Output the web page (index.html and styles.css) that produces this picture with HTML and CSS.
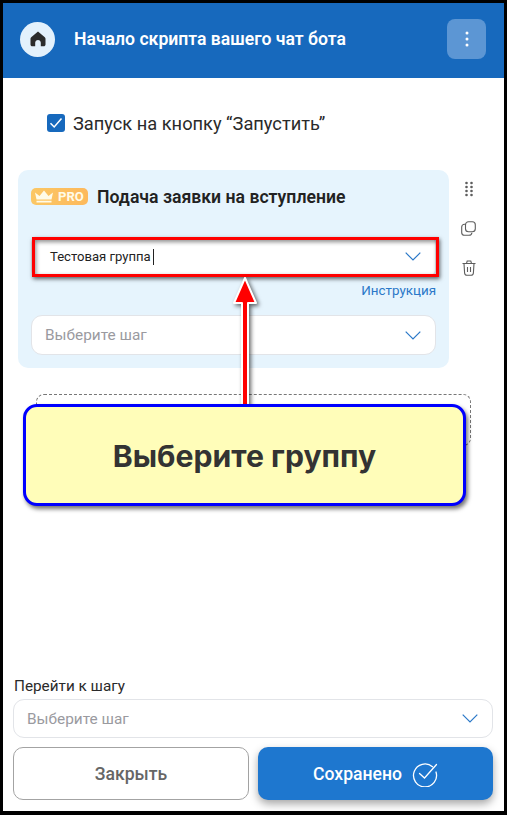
FILE: index.html
```html
<!DOCTYPE html>
<html lang="ru">
<head>
<meta charset="utf-8">
<title>Начало скрипта</title>
<link rel="stylesheet" href="styles.css">
</head>
<body>
<div class="app">
  <header class="topbar">
    <span class="home"><svg width="18" height="18" viewBox="0 0 18 18"><path d="M9 1.6 2.2 7.2c-.5.4-.7.9-.7 1.5v5.8c0 1 .8 1.8 1.8 1.8h2.9v-3.6c0-1.5 1.2-2.8 2.8-2.8s2.8 1.3 2.8 2.8v3.600h2.900c1 0 1.800-.8 1.800-1.800V8.700c0-.6-.2-1.100-.7-1.500z" fill="#2b2b2b"/></svg></span>
    <h1 class="topbar-title">Начало скрипта вашего чат бота</h1>
    <button class="menu-btn"><svg width="4" height="16" viewBox="0 0 4 16"><circle cx="2" cy="2" r="1.500" fill="#fff"/><circle cx="2" cy="8" r="1.500" fill="#fff"/><circle cx="2" cy="14" r="1.500" fill="#fff"/></svg></button>
  </header>

  <main class="content">
    <label class="check-row">
      <span class="checkbox"><svg width="14" height="12" viewBox="0 0 14 12"><path d="M1.500 6.200 5.200 10 12.500 1.500" fill="none" stroke="#fff" stroke-width="1.500"/></svg></span>
      Запуск на кнопку “Запустить”
    </label>

    <div class="step-row">
      <section class="card">
        <div class="card-head">
          <span class="pro"><svg width="20" height="13" viewBox="0 0 20 13"><path d="M1 2.500 5.500 6 10 .5 14.500 6 19 2.500 17.500 9.500H2.500zM2.500 10.800h15V12.500h-15z" fill="#fffbe8"/></svg>PRO</span>
          <h2 class="card-title">Подача заявки на вступление</h2>
        </div>
        <div class="select select-active">
          <span class="select-text">Тестовая группа<i class="caret"></i></span>
          <svg class="chev" width="16" height="9" viewBox="0 0 16 9"><path d="M.7.7 8 8 15.300.7" fill="none" stroke="#2a78c8" stroke-width="1.200"/></svg>
        </div>
        <a class="help">Инструкция</a>
        <div class="select">
          <span class="placeholder">Выберите шаг</span>
          <svg class="chev" width="16" height="9" viewBox="0 0 16 9"><path d="M.7.7 8 8 15.300.7" fill="none" stroke="#2a78c8" stroke-width="1.200"/></svg>
        </div>
      </section>
      <div class="tools">
        <svg width="8" height="16" viewBox="0 0 8 16"><g fill="#5d5d5d"><circle cx="1.500" cy="2" r="1.300"/><circle cx="6.500" cy="2" r="1.300"/><circle cx="1.500" cy="6" r="1.300"/><circle cx="6.500" cy="6" r="1.300"/><circle cx="1.500" cy="10" r="1.300"/><circle cx="6.500" cy="10" r="1.300"/><circle cx="1.500" cy="14" r="1.300"/><circle cx="6.500" cy="14" r="1.300"/></g></svg>
        <svg width="15" height="15" viewBox="0 0 15 15"><g fill="none" stroke="#5d5d5d" stroke-width="1.100"><rect x="4.500" y=".7" width="9.800" height="10" rx="3"/><path d="M4.300 3.300H3.500C1.900 3.300.7 4.500.7 6.100v5.400c0 1.600 1.200 2.800 2.800 2.800H8c1.600 0 2.800-1 2.900-2.600"/></g></svg>
        <svg width="14" height="16" viewBox="0 0 14 16"><g fill="none" stroke="#5d5d5d" stroke-width="1.100"><path d="M.5 3.500h13M4.500 3.300 5.200 1h3.600l.7 2.300M2 3.500l.6 9.500c.1 1.300 1 2.300 2.300 2.300h4.200c1.300 0 2.200-1 2.300-2.300l.6-9.500M5.500 7v5M8.500 7v5"/></g></svg>
      </div>
    </div>

    <div class="dropzone"></div>
  </main>

  <footer class="bottom">
    <div class="bottom-label">Перейти к шагу</div>
    <div class="select">
      <span class="placeholder">Выберите шаг</span>
      <svg class="chev" width="16" height="9" viewBox="0 0 16 9"><path d="M.7.7 8 8 15.300.7" fill="none" stroke="#2a78c8" stroke-width="1.200"/></svg>
    </div>
    <div class="actions">
      <button class="btn btn-close">Закрыть</button>
      <button class="btn btn-save">Сохранено
        <svg width="26" height="26" viewBox="0 0 26 26"><g fill="none" stroke="#fff" stroke-width="1.300" stroke-linecap="round"><path d="M20.500 5.700A11.500 11.500 0 1 0 24 11"/><path d="M7.500 12.500 12.500 17 24.500 3.500"/></g></svg>
      </button>
    </div>
  </footer>

  <div class="highlight"></div>
  <svg class="arrow" width="30" height="140" viewBox="0 0 30 140"><path d="M15 3 26 28H18V129a3 3 0 0 1-6 0V28H4z" fill="#f00" stroke="#fff" stroke-width="2" stroke-linejoin="round"/></svg>
  <div class="callout">Выберите группу</div>
</div>
</body>
</html>
```
FILE: styles.css
```css
* { box-sizing: border-box; }
html, body { margin: 0; padding: 0; }
body {
  width: 507px;
  height: 815px;
  background: #000;
  overflow: hidden;
  font-family: Roboto, "Liberation Sans", sans-serif;
  color: #222;
}
.app {
  position: relative;
  width: 501px;
  height: 808px;
  margin: 3px 3px 4px;
  background: #fff;
  display: flex;
  flex-direction: column;
}
.topbar {
  height: 75px;
  flex: none;
  background: #1769bd;
  display: flex;
  align-items: center;
  padding: 0 18px 3px 17px;
}
.home {
  width: 35px;
  height: 35px;
  border-radius: 50%;
  background: #e3f1fc;
  display: flex;
  align-items: center;
  justify-content: center;
  flex: none;
}
.topbar-title {
  margin: 0 0 0 19px;
  flex: 1;
  color: #fff;
  font-size: 17.600px;
  font-weight: 600;
}
.menu-btn {
  width: 39px;
  height: 40px;
  border: 0;
  border-radius: 8px;
  background: #5c96d4;
  padding: 0;
  display: flex;
  align-items: center;
  justify-content: center;
}
.content {
  flex: 1;
  padding: 36px 0 0 15px;
}
.check-row {
  display: flex;
  align-items: center;
  gap: 8px;
  margin-left: 29px;
  height: 18px;
  font-size: 18.250px;
  color: #2a2a2a;
}
.checkbox {
  width: 18px;
  height: 18px;
  border-radius: 3px;
  background: #1769bd;
  display: flex;
  align-items: center;
  justify-content: center;
  flex: none;
}
.step-row {
  display: flex;
  margin-top: 38px;
}
.card {
  width: 431px;
  height: 198px;
  background: #e6f4fd;
  border-radius: 10px;
  padding: 18px 13px 0;
}
.card-head {
  display: flex;
  align-items: center;
  gap: 9px;
  height: 17px;
  margin-bottom: 32px;
}
.pro {
  width: 57px;
  height: 17px;
  border-radius: 5px;
  background: linear-gradient(90deg, #fbc765, #fdb95c);
  color: #fffbe8;
  font-size: 13px;
  font-weight: 700;
  display: flex;
  align-items: center;
  gap: 4px;
  padding-left: 3px;
}
.card-title {
  margin: 0;
  font-size: 17.650px;
  font-weight: 600;
  color: #222;
  white-space: nowrap;
}
.select {
  height: 40px;
  background: #fff;
  border: 1px solid #e2e4e8;
  border-radius: 11px;
  display: flex;
  align-items: center;
  justify-content: space-between;
  padding: 0 14px 0 13px;
}
.select-active {
  height: 39px;
  padding-left: 18px;
  border-radius: 6px;
}
.select-text {
  font-size: 13.100px;
  color: #222;
  display: flex;
  align-items: center;
}
.caret {
  width: 1px;
  height: 16px;
  background: #222;
  margin-left: 2px;
}
.placeholder {
  font-size: 15.400px;
  color: #9a9a9f;
}
.chev { flex: none; }
.help {
  display: block;
  text-align: right;
  font-size: 13.400px;
  line-height: 15px;
  color: #2a78c8;
  margin: 7px 0 17px;
}
.tools {
  display: flex;
  flex-direction: column;
  align-items: center;
  gap: 24px;
  width: 38px;
  padding: 11px 0 0 1px;
}
.dropzone {
  width: 435px;
  height: 52px;
  margin: 26px 0 0 18px;
  border: 1px dashed #777;
  border-radius: 8px;
}
.bottom {
  flex: none;
  padding: 0 11px 11px 10px;
}
.bottom-label {
  font-size: 15.300px;
  line-height: 17px;
  color: #2a2a2a;
  margin: 0 0 4px 1px;
}
.bottom .select {
  height: 39px;
}
.actions {
  display: flex;
  gap: 9px;
  margin-top: 9px;
}
.btn {
  height: 53px;
  border-radius: 10px;
  font-family: Roboto, "Liberation Sans", sans-serif;
  font-size: 17.600px;
  font-weight: 500;
  display: flex;
  align-items: center;
  justify-content: center;
}
.btn-close {
  width: 236px;
  background: #fff;
  border: 1px solid #a3a3a3;
  color: #666;
}
.btn-save {
  flex: 1;
  gap: 10px;
  background: #1e77cf;
  border: 0;
  color: #fff;
  box-shadow: 0 4px 8px rgba(0, 0, 0, .35);
}
.highlight {
  position: absolute;
  left: 29px;
  top: 234px;
  width: 407px;
  height: 40px;
  border: 3px solid #f00;
  box-shadow: 1px 2px 4px rgba(0, 0, 0, .6), inset 1px 2px 4px rgba(0, 0, 0, .45);
}
.arrow {
  position: absolute;
  left: 227px;
  top: 272px;
  filter: drop-shadow(2px 2px 2px rgba(0, 0, 0, .6));
}
.callout {
  position: absolute;
  left: 20px;
  top: 401px;
  width: 443px;
  height: 102px;
  padding-top: 2px;
  background: #fffdb9;
  border: 3px solid #00f;
  border-radius: 14px;
  box-shadow: 2px 3px 4px rgba(0, 0, 0, .55);
  display: flex;
  align-items: center;
  justify-content: center;
  font-family: Inter, "Liberation Sans", sans-serif;
  font-size: 30.200px;
  font-weight: 700;
  color: #333;
}
```
